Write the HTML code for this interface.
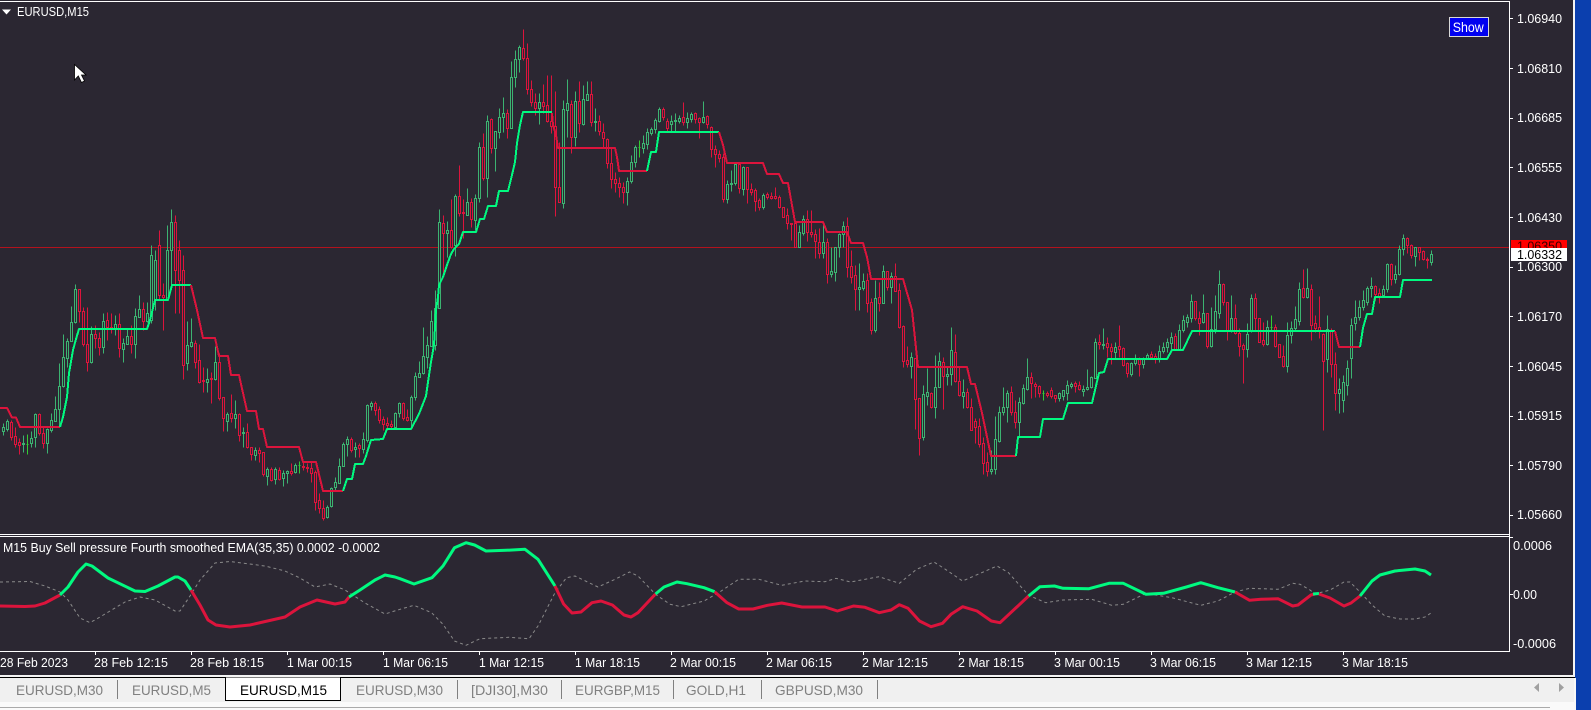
<!DOCTYPE html>
<html><head><meta charset="utf-8"><title>EURUSD,M15</title>
<style>
html,body{margin:0;padding:0;background:#0b3fae;width:1591px;height:710px;overflow:hidden}
svg{display:block}
text{font-family:"Liberation Sans",sans-serif;fill:#fff;font-size:12.5px}
.t text{font-size:14px;fill:#808080}
.c path{fill:#2b2732;stroke-width:1}
.g{stroke:#3cb371}.r{stroke:#dc143c}.l{stroke:#32cd32}
</style></head><body>
<svg width="1591" height="710" viewBox="0 0 1591 710" xmlns="http://www.w3.org/2000/svg">
<rect width="1591" height="710" fill="#0b3fae"/>
<rect width="1574" height="675" fill="#2b2732"/>
<rect x="1573" y="0" width="2" height="678" fill="#f4f4f4"/>
<rect x="0" y="675" width="1575" height="2" fill="#f4f4f4"/>
<rect x="0" y="677" width="1575" height="1" fill="#000"/>
<rect x="0" y="678" width="1574" height="24" fill="#f0f0f0"/>
<rect x="1574" y="678" width="2" height="32" fill="#f8f8f8"/>
<rect x="0" y="702" width="1574" height="8" fill="#fafafa"/>
<rect x="0" y="707" width="1550" height="1" fill="#aaa"/>
<g shape-rendering="crispEdges">
<rect x="0" y="1" width="1510" height="1" fill="#fff"/>
<rect x="1509" y="1" width="1" height="651" fill="#fff"/>
<rect x="0" y="534" width="1510" height="1" fill="#fff"/>
<rect x="0" y="536" width="1510" height="1" fill="#fff"/>
<rect x="0" y="651" width="1510" height="1" fill="#fff"/>
<path stroke="#fff" fill="none" d="M1510 18.5h3M1510 68.5h3M1510 118.5h3M1510 167.5h3M1510 217.5h3M1510 267.5h3M1510 316.5h3M1510 366.5h3M1510 416.5h3M1510 465.5h3M1510 515.5h3M1510 537.5h3M1510 594.5h3M95.5 652v3M191.5 652v3M287.5 652v3M383.5 652v3M479.5 652v3M575.5 652v3M671.5 652v3M767.5 652v3M863.5 652v3M959.5 652v3M1055.5 652v3M1151.5 652v3M1247.5 652v3M1343.5 652v3"/>
<rect x="0" y="247" width="1509" height="1" fill="#b3121d"/>
</g>
<g class="c" transform="translate(.5 .5)" shape-rendering="crispEdges">
<path class="g" d="M3 423V427M3 431V435M2 427h2V431h-2zM7 419V421M7 429V431M6 421h2V429h-2z"/>
<path class="r" d="M11 420V422M11 437V440M10 422h2V437h-2zM15 427V436M15 444V447M14 436h2V444h-2zM19 438V442M19 445V454M18 442h2V445h-2z"/>
<path class="g" d="M23 435V443M23 444V452M22 443h2V444h-2z"/>
<path class="l" d="M27 434V454M26 444h2"/>
<path class="g" d="M31 431V438M31 443V447M30 438h2V443h-2zM35 413V414M35 437V447M34 414h2V437h-2z"/>
<path class="r" d="M39 413V414M39 433V435M38 414h2V433h-2zM43 427V433M43 443V448M42 433h2V443h-2z"/>
<path class="g" d="M47 428V429M47 443V453M46 429h2V443h-2zM51 413V420M51 430V432M50 420h2V430h-2zM55 396V409M55 421V421M54 409h2V421h-2zM59 363V386M59 409V427M58 386h2V409h-2zM63 334V357M63 386V387M62 357h2V386h-2zM67 338V341M67 358V367M66 341h2V358h-2zM71 306V322M71 341V341M70 322h2V341h-2zM75 284V289M75 322V323M74 289h2V322h-2z"/>
<path class="r" d="M79 289V289M79 311V322M78 289h2V311h-2zM83 307V311M83 344V346M82 311h2V344h-2zM87 307V344M87 362V371M86 344h2V362h-2z"/>
<path class="g" d="M91 326V334M91 362V363M90 334h2V362h-2z"/>
<path class="r" d="M95 325V334M95 338V348M94 334h2V338h-2zM99 332V338M99 347V355M98 338h2V347h-2z"/>
<path class="g" d="M103 313V321M103 347V353M102 321h2V347h-2z"/>
<path class="r" d="M107 312V320M107 327V340M106 320h2V327h-2zM111 313V327M111 329V333M110 327h2V329h-2z"/>
<path class="g" d="M115 315V324M115 329V335M114 324h2V329h-2z"/>
<path class="r" d="M119 313V324M119 348V357M118 324h2V348h-2z"/>
<path class="g" d="M123 338V343M123 349V362M122 343h2V349h-2zM127 329V336M127 344V344M126 336h2V344h-2z"/>
<path class="r" d="M131 325V336M131 344V353M130 336h2V344h-2z"/>
<path class="g" d="M135 308V316M135 344V358M134 316h2V344h-2zM139 295V309M139 317V317M138 309h2V317h-2z"/>
<path class="r" d="M143 302V309M143 321V330M142 309h2V321h-2z"/>
<path class="g" d="M147 302V313M147 321V322M146 313h2V321h-2zM151 245V255M151 320V323M150 255h2V320h-2zM155 250V260M155 300V310M154 260h2V300h-2z"/>
<path class="r" d="M159 230V245M159 295V300M158 245h2V295h-2zM163 283V295M163 297V330M162 295h2V297h-2z"/>
<path class="g" d="M167 225V250M167 299V300M166 250h2V299h-2zM171 209V222M171 250V285M170 222h2V250h-2z"/>
<path class="r" d="M175 215V222M175 270V313M174 222h2V270h-2zM179 240V250M179 280V313M178 250h2V280h-2zM183 255V270M183 365V379M182 270h2V365h-2z"/>
<path class="g" d="M187 321V345M187 363V370M186 345h2V363h-2zM191 318V342M191 346V347M190 342h2V346h-2z"/>
<path class="r" d="M195 340V343M195 362V368M194 343h2V362h-2zM199 344V360M199 382V383M198 360h2V382h-2zM203 367V380M203 381V392M202 380h2V381h-2z"/>
<path class="g" d="M207 368V379M207 382V392M206 379h2V382h-2z"/>
<path class="r" d="M211 372V378M211 379V403M210 378h2V379h-2z"/>
<path class="g" d="M215 346V362M215 379V380M214 362h2V379h-2z"/>
<path class="r" d="M219 353V362M219 398V400M218 362h2V398h-2zM223 397V397M223 418V431M222 397h2V418h-2z"/>
<path class="g" d="M227 412V414M227 421V431M226 414h2V421h-2z"/>
<path class="r" d="M231 394V413M231 418V422M230 413h2V418h-2z"/>
<path class="g" d="M235 400V414M235 418V428M234 414h2V418h-2z"/>
<path class="r" d="M239 413V414M239 435V441M238 414h2V435h-2z"/>
<path class="g" d="M243 427V432M243 433V447M242 432h2V433h-2z"/>
<path class="r" d="M247 423V432M247 447V448M246 432h2V447h-2zM251 447V447M251 454V460M250 447h2V454h-2z"/>
<path class="g" d="M255 447V450M255 455V460M254 450h2V455h-2z"/>
<path class="r" d="M259 447V450M259 453V462M258 450h2V453h-2zM263 452V452M263 474V476M262 452h2V474h-2z"/>
<path class="g" d="M267 467V469M267 476V485M266 469h2V476h-2z"/>
<path class="r" d="M271 467V469M271 480V481M270 469h2V480h-2z"/>
<path class="g" d="M275 467V469M275 479V484M274 469h2V479h-2z"/>
<path class="r" d="M279 467V470M279 479V480M278 470h2V479h-2z"/>
<path class="g" d="M283 470V473M283 478V486M282 473h2V478h-2zM287 470V471M287 473V483M286 471h2V473h-2z"/>
<path class="r" d="M291 463V471M291 473V475M290 471h2V473h-2z"/>
<path class="g" d="M295 463V465M295 472V473M294 465h2V472h-2z"/>
<path class="l" d="M299 461V473M298 465h2"/>
<path class="r" d="M303 462V466M303 467V470M302 466h2V467h-2zM307 463V467M307 468V472M306 467h2V468h-2zM311 462V468M311 473V482M310 468h2V473h-2zM315 470V472M315 502V510M314 472h2V502h-2zM319 493V500M319 508V513M318 500h2V508h-2zM323 500V508M323 518V520M322 508h2V518h-2z"/>
<path class="g" d="M327 505V507M327 517V518M326 507h2V517h-2zM331 487V488M331 506V507M330 488h2V506h-2zM335 477V482M335 487V490M334 482h2V487h-2zM339 458V466M339 483V483M338 466h2V483h-2zM343 442V444M343 466V466M342 444h2V466h-2zM347 436V439M347 444V456M346 439h2V444h-2z"/>
<path class="r" d="M351 437V439M351 450V452M350 439h2V450h-2z"/>
<path class="g" d="M355 442V447M355 449V457M354 447h2V449h-2z"/>
<path class="r" d="M359 443V445M359 448V457M358 445h2V448h-2z"/>
<path class="g" d="M363 432V439M363 449V453M362 439h2V449h-2zM367 404V405M367 440V442M366 405h2V440h-2zM371 401V403M371 406V410M370 403h2V406h-2z"/>
<path class="r" d="M375 401V403M375 410V415M374 403h2V410h-2zM379 406V409M379 420V423M378 409h2V420h-2zM383 416V419M383 424V430M382 419h2V424h-2zM387 417V423M387 425V428M386 423h2V425h-2zM391 420V424M391 426V428M390 424h2V426h-2z"/>
<path class="g" d="M395 412V413M395 427V427M394 413h2V427h-2zM399 402V403M399 413V417M398 403h2V413h-2z"/>
<path class="r" d="M403 402V403M403 418V420M402 403h2V418h-2zM407 409V417M407 420V421M406 417h2V420h-2z"/>
<path class="g" d="M411 395V397M411 420V427M410 397h2V420h-2zM415 372V376M415 397V400M414 376h2V397h-2zM419 361V373M419 377V377M418 373h2V377h-2zM423 327V356M423 373V374M422 356h2V373h-2zM427 336V345M427 357V368M426 345h2V357h-2zM431 310V321M431 346V346M430 321h2V346h-2zM435 290V308M435 345V350M434 308h2V345h-2zM439 209V222M439 308V308M438 222h2V308h-2z"/>
<path class="r" d="M443 215V223M443 233V273M442 223h2V233h-2z"/>
<path class="g" d="M447 221V230M447 233V257M446 230h2V233h-2z"/>
<path class="r" d="M451 199V230M451 247V248M450 230h2V247h-2z"/>
<path class="g" d="M455 194V196M455 245V256M454 196h2V245h-2z"/>
<path class="r" d="M459 165V196M459 213V216M458 196h2V213h-2zM463 199V212M463 213V238M462 212h2V213h-2z"/>
<path class="g" d="M467 188V202M467 215V215M466 202h2V215h-2z"/>
<path class="r" d="M471 198V202M471 219V227M470 202h2V219h-2z"/>
<path class="g" d="M475 194V198M475 220V230M474 198h2V220h-2zM479 142V147M479 198V202M478 147h2V198h-2z"/>
<path class="r" d="M483 133V147M483 178V180M482 147h2V178h-2z"/>
<path class="g" d="M487 115V121M487 178V197M486 121h2V178h-2z"/>
<path class="r" d="M491 118V119M491 148V153M490 119h2V148h-2z"/>
<path class="g" d="M495 131V131M495 148V171M494 131h2V148h-2zM499 108V117M499 132V138M498 117h2V132h-2zM503 97V113M503 117V132M502 113h2V117h-2z"/>
<path class="r" d="M507 109V113M507 128V138M506 113h2V128h-2z"/>
<path class="g" d="M511 61V77M511 128V128M510 77h2V128h-2zM515 50V59M515 77V87M514 59h2V77h-2zM519 45V47M519 59V72M518 47h2V59h-2z"/>
<path class="r" d="M523 29V48M523 58V60M522 48h2V58h-2zM527 43V58M527 89V94M526 58h2V89h-2zM531 80V89M531 102V106M530 89h2V102h-2zM535 93V102M535 108V115M534 102h2V108h-2z"/>
<path class="g" d="M539 93V102M539 108V124M538 102h2V108h-2z"/>
<path class="r" d="M543 84V102M543 106V113M542 102h2V106h-2zM547 75V105M547 121V122M546 105h2V121h-2zM551 75V121M551 126V133M550 121h2V126h-2zM555 91V126M555 187V216M554 126h2V187h-2zM559 142V187M559 202V202M558 187h2V202h-2z"/>
<path class="g" d="M563 100V109M563 203V208M562 109h2V203h-2zM567 79V103M567 110V137M566 103h2V110h-2z"/>
<path class="r" d="M571 100V104M571 137V153M570 104h2V137h-2z"/>
<path class="g" d="M575 91V101M575 137V146M574 101h2V137h-2z"/>
<path class="r" d="M579 81V101M579 123V132M578 101h2V123h-2z"/>
<path class="g" d="M583 85V99M583 124V125M582 99h2V124h-2zM587 81V94M587 100V100M586 94h2V100h-2z"/>
<path class="r" d="M591 81V94M591 122V126M590 94h2V122h-2z"/>
<path class="g" d="M595 108V121M595 122V131M594 121h2V122h-2z"/>
<path class="r" d="M599 115V121M599 131V135M598 121h2V131h-2zM603 123V132M603 138V148M602 132h2V138h-2zM607 138V139M607 163V168M606 139h2V163h-2zM611 148V163M611 179V188M610 163h2V179h-2zM615 172V179M615 183V192M614 179h2V183h-2zM619 177V183M619 187V197M618 183h2V187h-2zM623 182V187M623 192V203M622 187h2V192h-2z"/>
<path class="g" d="M627 177V181M627 192V205M626 181h2V192h-2zM631 155V162M631 181V183M630 162h2V181h-2zM635 145V147M635 162V167M634 147h2V162h-2z"/>
<path class="l" d="M639 140V157M638 147h2"/>
<path class="g" d="M643 135V143M643 148V153M642 143h2V148h-2zM647 128V132M647 144V149M646 132h2V144h-2zM651 127V129M651 133V135M650 129h2V133h-2zM655 118V120M655 129V133M654 120h2V129h-2zM659 107V109M659 121V122M658 109h2V121h-2z"/>
<path class="r" d="M663 107V109M663 117V120M662 109h2V117h-2zM667 118V121M667 128V132M666 121h2V128h-2z"/>
<path class="g" d="M671 115V121M671 124V132M670 121h2V124h-2zM675 113V120M675 121V132M674 120h2V121h-2zM679 115V118M679 121V123M678 118h2V121h-2z"/>
<path class="r" d="M683 102V117M683 122V125M682 117h2V122h-2z"/>
<path class="g" d="M687 112V118M687 122V128M686 118h2V122h-2zM691 112V114M691 119V122M690 114h2V119h-2z"/>
<path class="r" d="M695 112V113M695 119V123M694 113h2V119h-2zM699 117V118M699 122V138M698 118h2V122h-2z"/>
<path class="g" d="M703 101V117M703 122V123M702 117h2V122h-2z"/>
<path class="r" d="M707 115V116M707 124V128M706 116h2V124h-2zM711 126V127M711 149V157M710 127h2V149h-2zM715 145V149M715 154V167M714 149h2V154h-2zM719 150V154M719 158V162M718 154h2V158h-2zM723 153V157M723 199V202M722 157h2V199h-2z"/>
<path class="g" d="M727 180V184M727 199V203M726 184h2V199h-2zM731 170V183M731 184V191M730 183h2V184h-2zM735 163V164M735 183V185M734 164h2V183h-2z"/>
<path class="r" d="M739 163V164M739 188V193M738 164h2V188h-2z"/>
<path class="g" d="M743 166V167M743 189V195M742 167h2V189h-2z"/>
<path class="r" d="M747 167V167M747 189V203M746 167h2V189h-2zM751 183V189M751 192V195M750 189h2V192h-2zM755 188V190M755 201V211M754 190h2V201h-2zM759 198V200M759 207V210M758 200h2V207h-2z"/>
<path class="g" d="M763 193V195M763 207V209M762 195h2V207h-2z"/>
<path class="r" d="M767 192V194M767 197V199M766 194h2V197h-2zM771 192V196M771 198V199M770 196h2V198h-2zM775 187V196M775 198V199M774 196h2V198h-2zM779 195V197M779 207V208M778 197h2V207h-2zM783 207V207M783 217V217M782 207h2V217h-2zM787 208V215M787 223V229M786 215h2V223h-2zM791 223V223M791 224V240M790 223h2V224h-2zM795 222V223M795 247V247M794 223h2V247h-2z"/>
<path class="g" d="M799 225V232M799 247V247M798 232h2V247h-2zM803 215V219M803 233V235M802 219h2V233h-2z"/>
<path class="r" d="M807 210V219M807 232V241M806 219h2V232h-2zM811 210V232M811 234V237M810 232h2V234h-2zM815 229V234M815 241V258M814 234h2V241h-2zM819 228V242M819 253V258M818 242h2V253h-2z"/>
<path class="g" d="M823 224V242M823 253V258M822 242h2V253h-2z"/>
<path class="r" d="M827 238V242M827 274V283M826 242h2V274h-2z"/>
<path class="g" d="M831 247V271M831 274V277M830 271h2V274h-2zM835 247V247M835 272V281M834 247h2V272h-2zM839 233V234M839 247V257M838 234h2V247h-2zM843 221V226M843 234V247M842 226h2V234h-2z"/>
<path class="r" d="M847 217V226M847 267V277M846 226h2V267h-2zM851 250V266M851 277V283M850 266h2V277h-2zM855 265V275M855 289V310M854 275h2V289h-2z"/>
<path class="g" d="M859 263V287M859 289V310M858 287h2V289h-2zM863 273V281M863 288V290M862 281h2V288h-2z"/>
<path class="r" d="M867 273V280M867 303V312M866 280h2V303h-2zM871 298V302M871 330V334M870 302h2V330h-2z"/>
<path class="g" d="M875 280V298M875 330V332M874 298h2V330h-2z"/>
<path class="r" d="M879 282V297M879 303V311M878 297h2V303h-2z"/>
<path class="g" d="M883 265V271M883 303V303M882 271h2V303h-2z"/>
<path class="r" d="M887 271V271M887 287V290M886 271h2V287h-2z"/>
<path class="g" d="M891 272V276M891 287V303M890 276h2V287h-2z"/>
<path class="r" d="M895 263V276M895 291V291M894 276h2V291h-2zM899 283V290M899 327V328M898 290h2V327h-2zM903 325V326M903 361V367M902 326h2V361h-2zM907 346V360M907 364V367M906 360h2V364h-2z"/>
<path class="g" d="M911 352V357M911 366V378M910 357h2V366h-2z"/>
<path class="r" d="M915 358V358M915 399V429M914 358h2V399h-2zM919 398V398M919 438V455M918 398h2V438h-2z"/>
<path class="g" d="M923 385V394M923 437V440M922 394h2V437h-2zM927 368V392M927 396V405M926 392h2V396h-2z"/>
<path class="r" d="M931 392V393M931 407V408M930 393h2V407h-2z"/>
<path class="g" d="M935 355V387M935 407V418M934 387h2V407h-2zM939 352V361M939 387V387M938 361h2V387h-2z"/>
<path class="r" d="M943 357V362M943 376V409M942 362h2V376h-2z"/>
<path class="g" d="M947 367V374M947 376V385M946 374h2V376h-2zM951 327V350M951 374V385M950 350h2V374h-2z"/>
<path class="r" d="M955 334V352M955 381V382M954 352h2V381h-2zM959 367V381M959 395V396M958 381h2V395h-2z"/>
<path class="g" d="M963 379V392M963 396V408M962 392h2V396h-2z"/>
<path class="r" d="M967 388V392M967 407V408M966 392h2V407h-2zM971 398V407M971 430V430M970 407h2V430h-2zM975 418V421M975 427V443M974 421h2V427h-2zM979 418V426M979 444V447M978 426h2V444h-2zM983 437V443M983 463V474M982 443h2V463h-2zM987 452V462M987 471V476M986 462h2V471h-2z"/>
<path class="g" d="M991 450V469M991 471V474M990 469h2V471h-2zM995 416V439M995 469V474M994 439h2V469h-2zM999 406V412M999 441V442M998 412h2V441h-2zM1003 387V407M1003 412V415M1002 407h2V412h-2zM1007 390V393M1007 407V422M1006 393h2V407h-2z"/>
<path class="r" d="M1011 386V392M1011 412V415M1010 392h2V412h-2zM1015 400V412M1015 422V428M1014 412h2V422h-2z"/>
<path class="g" d="M1019 397V402M1019 422V437M1018 402h2V422h-2zM1023 384V388M1023 403V404M1022 388h2V403h-2zM1027 358V377M1027 389V390M1026 377h2V389h-2z"/>
<path class="r" d="M1031 372V377M1031 383V398M1030 377h2V383h-2zM1035 382V384M1035 386V397M1034 384h2V386h-2zM1039 385V386M1039 393V397M1038 386h2V393h-2z"/>
<path class="l" d="M1043 390V400M1042 393h2"/>
<path class="r" d="M1047 391V393M1047 395V397M1046 393h2V395h-2zM1051 387V390M1051 396V398M1050 390h2V396h-2zM1055 395V395M1055 398V402M1054 395h2V398h-2z"/>
<path class="g" d="M1059 392V393M1059 398V401M1058 393h2V398h-2zM1063 390V390M1063 396V400M1062 390h2V396h-2zM1067 380V385M1067 393V400M1066 385h2V393h-2zM1071 382V384M1071 386V388M1070 384h2V386h-2z"/>
<path class="r" d="M1075 381V383M1075 386V392M1074 383h2V386h-2zM1079 381V385M1079 389V390M1078 385h2V389h-2z"/>
<path class="g" d="M1083 385V389M1083 391V396M1082 389h2V391h-2zM1087 369V387M1087 389V390M1086 387h2V389h-2zM1091 376V377M1091 387V388M1090 377h2V387h-2zM1095 338V342M1095 378V378M1094 342h2V378h-2z"/>
<path class="r" d="M1099 334V342M1099 344V349M1098 342h2V344h-2z"/>
<path class="g" d="M1103 328V344M1103 345V349M1102 344h2V345h-2z"/>
<path class="r" d="M1107 337V343M1107 347V357M1106 343h2V347h-2zM1111 343V347M1111 351V364M1110 347h2V351h-2z"/>
<path class="g" d="M1115 342V347M1115 352V358M1114 347h2V352h-2z"/>
<path class="r" d="M1119 325V346M1119 349V357M1118 346h2V349h-2zM1123 347V348M1123 365V366M1122 348h2V365h-2zM1127 362V363M1127 373V377M1126 363h2V373h-2z"/>
<path class="g" d="M1131 362V363M1131 374V376M1130 363h2V374h-2zM1135 354V359M1135 363V365M1134 359h2V363h-2z"/>
<path class="r" d="M1139 357V359M1139 364V376M1138 359h2V364h-2z"/>
<path class="g" d="M1143 357V359M1143 364V368M1142 359h2V364h-2zM1147 353V355M1147 359V359M1146 355h2V359h-2z"/>
<path class="r" d="M1151 351V354M1151 357V358M1150 354h2V357h-2zM1155 353V356M1155 359V363M1154 356h2V359h-2z"/>
<path class="g" d="M1159 345V351M1159 359V362M1158 351h2V359h-2zM1163 342V347M1163 351V353M1162 347h2V351h-2zM1167 338V342M1167 347V352M1166 342h2V347h-2zM1171 332V337M1171 343V350M1170 337h2V343h-2z"/>
<path class="r" d="M1175 333V336M1175 349V349M1174 336h2V349h-2z"/>
<path class="g" d="M1179 324V330M1179 349V349M1178 330h2V349h-2zM1183 315V320M1183 330V332M1182 320h2V330h-2zM1187 314V317M1187 322V327M1186 317h2V322h-2zM1191 294V301M1191 318V322M1190 301h2V318h-2z"/>
<path class="r" d="M1195 301V301M1195 318V320M1194 301h2V318h-2zM1199 311V318M1199 323V335M1198 318h2V323h-2z"/>
<path class="g" d="M1203 294V313M1203 322V323M1202 313h2V322h-2z"/>
<path class="r" d="M1207 313V313M1207 346V348M1206 313h2V346h-2z"/>
<path class="g" d="M1211 307V329M1211 346V347M1210 329h2V346h-2zM1215 295V311M1215 329V333M1214 311h2V329h-2zM1219 270V284M1219 313V318M1218 284h2V313h-2z"/>
<path class="r" d="M1223 283V284M1223 302V305M1222 284h2V302h-2zM1227 302V302M1227 330V340M1226 302h2V330h-2z"/>
<path class="g" d="M1231 295V318M1231 331V332M1230 318h2V331h-2z"/>
<path class="r" d="M1235 304V318M1235 333V334M1234 318h2V333h-2zM1239 328V333M1239 346V356M1238 333h2V346h-2zM1243 343V345M1243 349V383M1242 345h2V349h-2z"/>
<path class="g" d="M1247 323V334M1247 349V357M1246 334h2V349h-2zM1251 294V298M1251 330V332M1250 298h2V330h-2z"/>
<path class="r" d="M1255 293V298M1255 318V330M1254 298h2V318h-2zM1259 318V318M1259 342V342M1258 318h2V342h-2zM1263 322V340M1263 344V346M1262 340h2V344h-2z"/>
<path class="g" d="M1267 320V327M1267 344V345M1266 327h2V344h-2z"/>
<path class="l" d="M1271 315V330M1270 327h2"/>
<path class="r" d="M1275 324V327M1275 346V347M1274 327h2V346h-2zM1279 344V344M1279 357V357M1278 344h2V357h-2zM1283 345V356M1283 366V367M1282 356h2V366h-2z"/>
<path class="g" d="M1287 322V335M1287 366V372M1286 335h2V366h-2zM1291 321V328M1291 335V343M1290 328h2V335h-2zM1295 306V319M1295 328V330M1294 319h2V328h-2zM1299 282V289M1299 321V325M1298 289h2V321h-2z"/>
<path class="r" d="M1303 269V288M1303 297V298M1302 288h2V297h-2z"/>
<path class="g" d="M1307 268V288M1307 297V298M1306 288h2V297h-2z"/>
<path class="r" d="M1311 284V289M1311 325V340M1310 289h2V325h-2zM1315 315V323M1315 328V332M1314 323h2V328h-2zM1319 296V327M1319 331V338M1318 327h2V331h-2zM1323 333V334M1323 361V430M1322 334h2V361h-2z"/>
<path class="g" d="M1327 315V329M1327 359V372M1326 329h2V359h-2z"/>
<path class="r" d="M1331 328V331M1331 364V377M1330 331h2V364h-2zM1335 352V364M1335 393V410M1334 364h2V393h-2z"/>
<path class="g" d="M1339 378V389M1339 393V413M1338 389h2V393h-2zM1343 375V382M1343 400V412M1342 382h2V400h-2zM1347 360V368M1347 385V395M1346 368h2V385h-2zM1351 318V325M1351 358V378M1350 325h2V358h-2zM1355 300V317M1355 323V330M1354 317h2V323h-2zM1359 300V307M1359 317V320M1358 307h2V317h-2zM1363 290V300M1363 307V310M1362 300h2V307h-2zM1367 286V288M1367 302V305M1366 288h2V302h-2zM1371 277V286M1371 288V297M1370 286h2V288h-2z"/>
<path class="r" d="M1375 285V286M1375 294V300M1374 286h2V294h-2zM1379 288V293M1379 296V303M1378 293h2V296h-2z"/>
<path class="g" d="M1383 285V289M1383 295V297M1382 289h2V295h-2zM1387 263V264M1387 289V292M1386 264h2V289h-2z"/>
<path class="r" d="M1391 263V264M1391 279V285M1390 264h2V279h-2z"/>
<path class="g" d="M1395 265V274M1395 279V283M1394 274h2V279h-2zM1399 245V249M1399 274V275M1398 249h2V274h-2zM1403 234V238M1403 249V255M1402 238h2V249h-2z"/>
<path class="r" d="M1407 237V238M1407 245V253M1406 238h2V245h-2zM1411 244V245M1411 255V258M1410 245h2V255h-2z"/>
<path class="g" d="M1415 247V247M1415 256V266M1414 247h2V256h-2z"/>
<path class="r" d="M1419 247V247M1419 252V260M1418 247h2V252h-2zM1423 250V251M1423 259V260M1422 251h2V259h-2zM1427 257V259M1427 260V268M1426 259h2V260h-2z"/>
<path class="g" d="M1431 250V254M1431 262V265M1430 254h2V262h-2z"/>
</g>
<g fill="none" stroke-width="2" stroke-linejoin="round" shape-rendering="crispEdges">
<path stroke="#dc143c" d="M0 408H7L12 417.5H16L20 427H60"/>
<path stroke="#00fa80" d="M60 427L63 417L67 397L69 373L73 350L76 339L79 329H147L150 320L155 300H168L172 285H191"/>
<path stroke="#dc143c" d="M191 285L197 310L203 338H215L219 356H228L231 375H239L247 411H256L259 429H263L267 447H299L303 462H316L323 491H343"/>
<path stroke="#00fa80" d="M343 491L347 479H352L355 464H363L366 456L371 440L383 439L387 429H411L419 414L426 396L428 382L431 362L434 345L436 310L438 297L439 285L443 277L447 265L451 254L454 249L459 244L463 232H476L480 219H484L488 206H496L499 191H508L512 175L515 162L517 143L520 125L523 112H552"/>
<path stroke="#dc143c" d="M552 113L553 125L556 135L558 148H615L617 157L619 171H647"/>
<path stroke="#00fa80" d="M647 171L651 152H656L659 132H719"/>
<path stroke="#dc143c" d="M719 132L723 145L727 163H763L767 174H779L783 183H788L795 222H823L827 232H847L851 243H863L867 257L871 279H903L912 310L918 367H967L971 384H975L982 413L991 456H1016"/>
<path stroke="#00fa80" d="M1016 456L1018 437H1040L1043 419H1063L1068 403H1092L1099 373L1104 372L1108 359H1167L1172 350H1183L1192 331H1335"/>
<path stroke="#dc143c" d="M1335 331L1339 347H1360"/>
<path stroke="#00fa80" d="M1360 347L1363 328L1367 314H1372L1375 297H1400L1403 280H1432"/>
</g>
<g fill="none" stroke-linejoin="round">
<path stroke="#8a8a8a" stroke-width="1" stroke-dasharray="3 3" d="M0 582L30 581.5L45 586L60 592L68 600L80 618L90 622.7L100 617L125 602L140 597L155 600L175 611H180L190 596L200 580L215 563L230 561.5L265 566L285 571L300 578L315 587L330 584L345 590L365 603L385 614L400 609.3L414 605.3L431.6 612.7L443 624.3L454.5 641L466 645.3L480 638.7L509 637.3L529 638.7L538 626L555 592.7L566.5 577.7L575 576L598 587L615 579.3L629.6 572L638 576L655.5 594.3L670 604.3L681 606.7L704 601L718.6 592.7L738.7 579.3L759 579.3L781.7 585.3L804.7 581L825 581.7L836 578.3L850.6 582L879 576.7L899.4 583.3L916.6 569.3L934 562L945.4 569.3L962.6 581L997 566L1008.5 572.7L1028.6 595.3L1045.8 602.7L1063 600L1091.7 599.3L1111.8 605.3L1123.3 604.3L1146 593.3L1172 597.7L1200.8 605.3L1218 601L1235 592L1249.6 588.3L1278 589.3L1292.7 583.3L1300 584.3L1310 590L1315 594L1330 590L1344 582L1350 582L1360 592L1372 605L1385 616L1400 619L1415 619L1425 617L1431 613"/>
<g stroke-width="3">
<path stroke="#dc143c" d="M0 606L25 606.5L35 606L45 603L60 595"/>
<path stroke="#00fa80" d="M60 595L68 587L78 572L86 564L92 566L108 578L135 591L145 591.5L158 586L175 577L178 577L185 581L191 590"/>
<path stroke="#dc143c" d="M191 590L200 605L208 620L216 625L230 627L250 625L285 617L300 607L317 600L335 604L345 602L349 597"/>
<path stroke="#00fa80" d="M349 597L360 590L375 580L385 575L395 577L400 578.7L414 584L432 577.7L443 566L454.5 547.7L466 542.7L474.6 545L486 551L506 550.3L525 549.3L538 559.3L555 586"/>
<path stroke="#dc143c" d="M555 586L563.6 604L572 613L581 612L592 602.7L601 601L612.4 605L624 615L631 617L638 612.7L655.5 594"/>
<path stroke="#00fa80" d="M655.5 594L664 587L677 582L687 583.7L704 587.7L714.6 591.7"/>
<path stroke="#dc143c" d="M714.6 591.7L727 602.7L738.7 609L753 609L767.4 605.3L781.7 603L802 607L825 607L837.4 611L853.5 606L865 607.3L879.3 612.7L891 610L899.4 604.7L908 608.3L919.5 621L931 626.7L942.5 623.3L951 614.3L962.6 606.7L977 611L991.3 621L1000 622.7L1028.6 596"/>
<path stroke="#00fa80" d="M1028.6 596L1040 586.7L1054.4 586L1063 588.3L1089 588.7L1109 583.3L1123.3 583.3L1146 594.3L1163.5 593.3L1186.4 587L1200.8 582.7L1218 587.7L1235 592"/>
<path stroke="#dc143c" d="M1235 592L1249.6 600.3L1261 599.3L1278 598.7L1292.7 606L1298 605L1311 595L1315 594"/>
<path stroke="#00fa80" d="M1313 594L1319 593.5"/>
<path stroke="#dc143c" d="M1319 594L1330 598L1344 606L1351 603L1360 596"/>
<path stroke="#00fa80" d="M1360 596L1372 581L1380 575L1395 571L1415 569L1425 571L1431 575"/>
</g>
</g>
<rect x="1511" y="240" width="56" height="9" fill="#ff0000"/>
<text x="1517" y="250.5" textLength="45" lengthAdjust="spacingAndGlyphs" style="fill:#300">1.06350</text>
<rect x="1511" y="248" width="56" height="13" fill="#fff"/>
<text x="1517" y="259" textLength="45" lengthAdjust="spacingAndGlyphs" style="fill:#000">1.06332</text>
<g>
<text x="1517" y="23" textLength="45" lengthAdjust="spacingAndGlyphs">1.06940</text>
<text x="1517" y="73" textLength="45" lengthAdjust="spacingAndGlyphs">1.06810</text>
<text x="1517" y="122" textLength="45" lengthAdjust="spacingAndGlyphs">1.06685</text>
<text x="1517" y="172" textLength="45" lengthAdjust="spacingAndGlyphs">1.06555</text>
<text x="1517" y="222" textLength="45" lengthAdjust="spacingAndGlyphs">1.06430</text>
<text x="1517" y="271" textLength="45" lengthAdjust="spacingAndGlyphs">1.06300</text>
<text x="1517" y="321" textLength="45" lengthAdjust="spacingAndGlyphs">1.06170</text>
<text x="1517" y="371" textLength="45" lengthAdjust="spacingAndGlyphs">1.06045</text>
<text x="1517" y="420" textLength="45" lengthAdjust="spacingAndGlyphs">1.05915</text>
<text x="1517" y="470" textLength="45" lengthAdjust="spacingAndGlyphs">1.05790</text>
<text x="1517" y="519" textLength="45" lengthAdjust="spacingAndGlyphs">1.05660</text>
<text x="1513" y="550" textLength="39" lengthAdjust="spacingAndGlyphs">0.0006</text>
<text x="1513" y="599" textLength="24" lengthAdjust="spacingAndGlyphs">0.00</text>
<text x="1513" y="648" textLength="43" lengthAdjust="spacingAndGlyphs">-0.0006</text>
<text x="0" y="667" textLength="68" lengthAdjust="spacingAndGlyphs">28 Feb 2023</text>
<text x="94" y="667" textLength="74" lengthAdjust="spacingAndGlyphs">28 Feb 12:15</text>
<text x="190" y="667" textLength="74" lengthAdjust="spacingAndGlyphs">28 Feb 18:15</text>
<text x="287" y="667" textLength="65" lengthAdjust="spacingAndGlyphs">1 Mar 00:15</text>
<text x="383" y="667" textLength="65" lengthAdjust="spacingAndGlyphs">1 Mar 06:15</text>
<text x="479" y="667" textLength="65" lengthAdjust="spacingAndGlyphs">1 Mar 12:15</text>
<text x="575" y="667" textLength="65" lengthAdjust="spacingAndGlyphs">1 Mar 18:15</text>
<text x="670" y="667" textLength="66" lengthAdjust="spacingAndGlyphs">2 Mar 00:15</text>
<text x="766" y="667" textLength="66" lengthAdjust="spacingAndGlyphs">2 Mar 06:15</text>
<text x="862" y="667" textLength="66" lengthAdjust="spacingAndGlyphs">2 Mar 12:15</text>
<text x="958" y="667" textLength="66" lengthAdjust="spacingAndGlyphs">2 Mar 18:15</text>
<text x="1054" y="667" textLength="66" lengthAdjust="spacingAndGlyphs">3 Mar 00:15</text>
<text x="1150" y="667" textLength="66" lengthAdjust="spacingAndGlyphs">3 Mar 06:15</text>
<text x="1246" y="667" textLength="66" lengthAdjust="spacingAndGlyphs">3 Mar 12:15</text>
<text x="1342" y="667" textLength="66" lengthAdjust="spacingAndGlyphs">3 Mar 18:15</text>
<text x="17" y="16" textLength="72" lengthAdjust="spacingAndGlyphs">EURUSD,M15</text>
<text x="3" y="552" textLength="377" lengthAdjust="spacingAndGlyphs">M15 Buy Sell pressure Fourth smoothed EMA(35,35) 0.0002 -0.0002</text>
</g>
<path d="M2 9.5H11L6.5 14.5Z" fill="#fff"/>
<path d="M74.5 64.5V80L78.3 76L81.5 82.5L84.5 81L81.5 75H86Z" fill="#fff" stroke="#000" stroke-width=".8"/>
<rect x="1449.5" y="17.5" width="39" height="19" fill="#0000f0" stroke="#d8d8d8"/>
<text x="1452.7" y="32" textLength="31" lengthAdjust="spacingAndGlyphs" style="font-size:14px">Show</text>
<path fill="#fff" stroke="#000" shape-rendering="crispEdges" d="M225.5 677.5V700.5H340.5V677.5"/>
<path stroke="#808080" fill="none" shape-rendering="crispEdges" d="M117.5 680v19M457.5 680v19M561.5 680v19M673.5 680v19M761.5 680v19M877.5 680v19"/>
<g class="t">
<text x="16" y="695" textLength="87" lengthAdjust="spacingAndGlyphs">EURUSD,M30</text>
<text x="132" y="695" textLength="79" lengthAdjust="spacingAndGlyphs">EURUSD,M5</text>
<text x="240" y="695" textLength="87" lengthAdjust="spacingAndGlyphs" style="fill:#000">EURUSD,M15</text>
<text x="356" y="695" textLength="87" lengthAdjust="spacingAndGlyphs">EURUSD,M30</text>
<text x="471" y="695" textLength="77" lengthAdjust="spacingAndGlyphs">[DJI30],M30</text>
<text x="575" y="695" textLength="85" lengthAdjust="spacingAndGlyphs">EURGBP,M15</text>
<text x="686" y="695" textLength="60" lengthAdjust="spacingAndGlyphs">GOLD,H1</text>
<text x="775" y="695" textLength="88" lengthAdjust="spacingAndGlyphs">GBPUSD,M30</text>
</g>
<path d="M1539 683V692L1534 687.5ZM1559 683V692L1564 687.5Z" fill="#a0a0a0"/>
</svg>
</body></html>
